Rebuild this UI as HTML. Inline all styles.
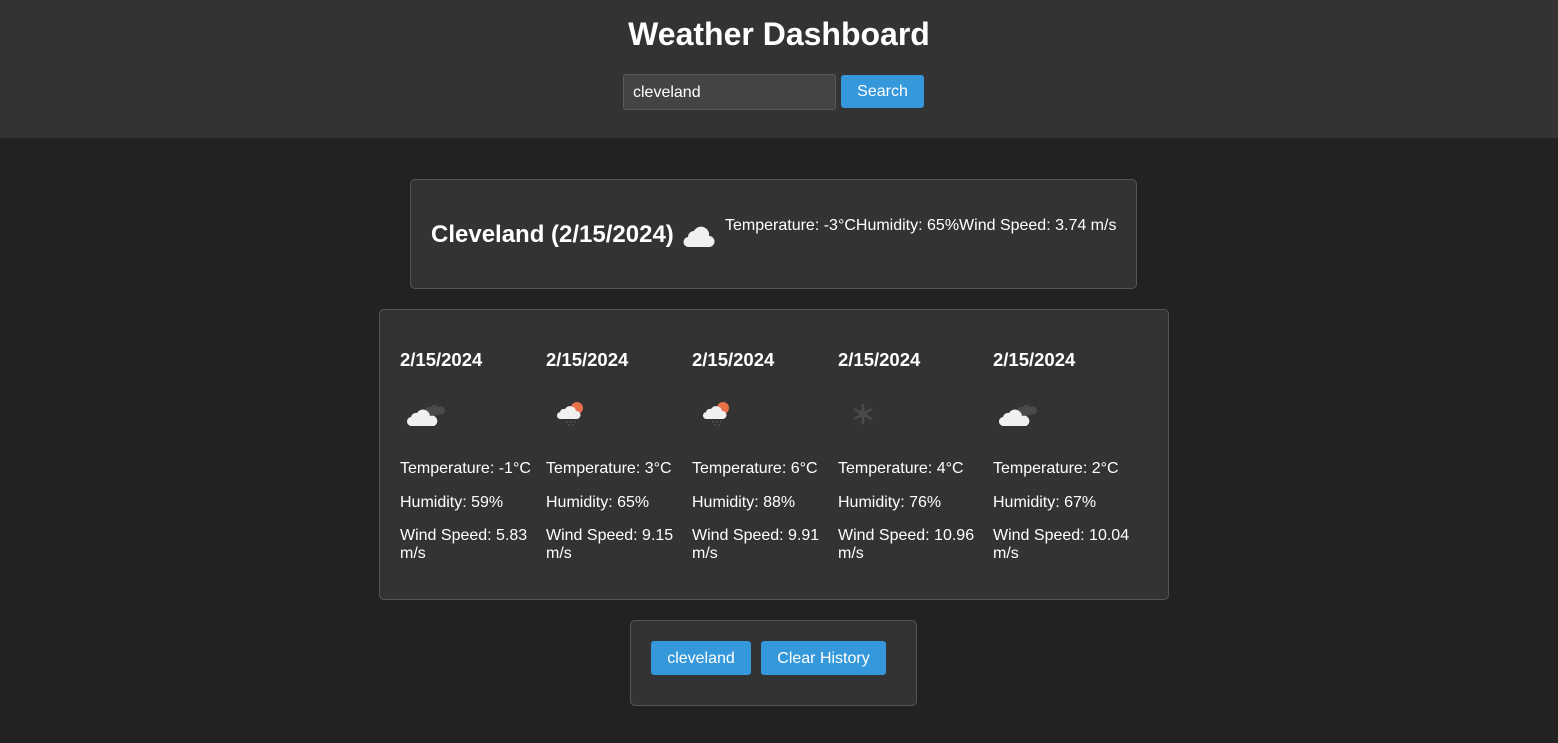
<!DOCTYPE html>
<html><head><meta charset="utf-8"><style>
*{margin:0;padding:0;box-sizing:border-box}
body{width:1558px;height:743px;background:#222;color:#fff;font-family:"Liberation Sans",Arial,sans-serif;position:relative;overflow:hidden}
.a{position:absolute}
header{position:absolute;left:0;top:0;width:1558px;height:138px;background:#333}
h1{position:absolute;top:16px;width:100%;text-align:center;font-size:32px;font-weight:bold}
.card{position:absolute;background:#333;border:1px solid #555;border-radius:5px}
.btn{position:absolute;background:#3498db;color:#fff;font-size:16px;border-radius:3px;text-align:center}
.t{position:absolute;font-size:16px;white-space:nowrap}
.d{position:absolute;font-size:18.5px;font-weight:bold;top:349px}
</style></head><body>
<header>
<h1>Weather Dashboard</h1>
<div class="a" style="left:623px;top:74px;width:213px;height:36px;background:#444;border:1px solid #5a5a5a;border-radius:3px;font-size:16px;padding:9px 9px">cleveland</div>
<div class="btn" style="left:841px;top:75px;width:83px;height:33px;line-height:34px">Search</div>
</header>

<div class="card" style="left:410px;top:179px;width:727px;height:110px"></div>
<div class="a" style="left:431px;top:221px;font-size:24px;font-weight:bold">Cleveland (2/15/2024)</div>
<svg class="a" style="left:683px;top:218px" width="32" height="30" viewBox="0 0 32 30"><path d="M6 29a5 5 0 0 1-1-10a6 6 0 0 1 6-6a8 8 0 0 1 15 5a5.5 5.5 0 0 1 0 11z" fill="#f0f0f0"/></svg>
<div class="t" style="left:725px;top:217px">Temperature: -3°CHumidity: 65%Wind Speed: 3.74 m/s</div>

<div class="card" style="left:379px;top:309px;width:790px;height:291px"></div>

<div class="d" style="left:400px">2/15/2024</div>
<div class="d" style="left:546px">2/15/2024</div>
<div class="d" style="left:692px">2/15/2024</div>
<div class="d" style="left:838px">2/15/2024</div>
<div class="d" style="left:993px">2/15/2024</div>

<svg class="a" style="left:406px;top:400px" width="40" height="28" viewBox="0 0 40 28"><path d="M22 17a4 4 0 0 1 3-10a4 4 0 0 1 7 0a4 4 0 0 1 5 7z" fill="#4a4a4a"/><path d="M6 26a4.5 4.5 0 0 1-1-9a5 5 0 0 1 6-4a7 7 0 0 1 13 3a5 5 0 0 1 4 10z" fill="#f0f0f0"/></svg>
<svg class="a" style="left:998px;top:400px" width="40" height="28" viewBox="0 0 40 28"><path d="M22 17a4 4 0 0 1 3-10a4 4 0 0 1 7 0a4 4 0 0 1 5 7z" fill="#4a4a4a"/><path d="M6 26a4.5 4.5 0 0 1-1-9a5 5 0 0 1 6-4a7 7 0 0 1 13 3a5 5 0 0 1 4 10z" fill="#f0f0f0"/></svg>

<svg class="a" style="left:556px;top:400px" width="32" height="28" viewBox="0 0 32 28"><circle cx="21" cy="8" r="6" fill="#e8714a"/><path d="M5 19a3.5 3.5 0 0 1-1-7a4 4 0 0 1 5-3a6 6 0 0 1 11 2a4 4 0 0 1 1 8z" fill="#f0f0f0"/><g fill="#555"><rect x="10" y="21" width="1.5" height="1.5"/><rect x="14" y="21" width="1.5" height="1.5"/><rect x="18" y="21" width="1.5" height="1.5"/><rect x="12" y="24" width="1.5" height="1.5"/><rect x="16" y="24" width="1.5" height="1.5"/></g></svg>
<svg class="a" style="left:702px;top:400px" width="32" height="28" viewBox="0 0 32 28"><circle cx="21" cy="8" r="6" fill="#e8714a"/><path d="M5 19a3.5 3.5 0 0 1-1-7a4 4 0 0 1 5-3a6 6 0 0 1 11 2a4 4 0 0 1 1 8z" fill="#f0f0f0"/><g fill="#555"><rect x="10" y="21" width="1.5" height="1.5"/><rect x="14" y="21" width="1.5" height="1.5"/><rect x="18" y="21" width="1.5" height="1.5"/><rect x="12" y="24" width="1.5" height="1.5"/><rect x="16" y="24" width="1.5" height="1.5"/></g></svg>

<svg class="a" style="left:852px;top:403px" width="22" height="22" viewBox="0 0 22 22"><g stroke="#4a4a4a" stroke-width="2.5" stroke-linecap="round"><line x1="11" y1="2" x2="11" y2="20"/><line x1="3" y1="6.5" x2="19" y2="15.5"/><line x1="3" y1="15.5" x2="19" y2="6.5"/></g><circle cx="11" cy="11" r="3" fill="none" stroke="#4a4a4a" stroke-width="2"/></svg>

<div class="t" style="left:400px;top:460px">Temperature: -1°C</div>
<div class="t" style="left:400px;top:494px">Humidity: 59%</div>
<div class="t" style="left:400px;top:527px;line-height:18px">Wind Speed: 5.83<br>m/s</div>
<div class="t" style="left:546px;top:460px">Temperature: 3°C</div>
<div class="t" style="left:546px;top:494px">Humidity: 65%</div>
<div class="t" style="left:546px;top:527px;line-height:18px">Wind Speed: 9.15<br>m/s</div>
<div class="t" style="left:692px;top:460px">Temperature: 6°C</div>
<div class="t" style="left:692px;top:494px">Humidity: 88%</div>
<div class="t" style="left:692px;top:527px;line-height:18px">Wind Speed: 9.91<br>m/s</div>
<div class="t" style="left:838px;top:460px">Temperature: 4°C</div>
<div class="t" style="left:838px;top:494px">Humidity: 76%</div>
<div class="t" style="left:838px;top:527px;line-height:18px">Wind Speed: 10.96<br>m/s</div>
<div class="t" style="left:993px;top:460px">Temperature: 2°C</div>
<div class="t" style="left:993px;top:494px">Humidity: 67%</div>
<div class="t" style="left:993px;top:527px;line-height:18px">Wind Speed: 10.04<br>m/s</div>

<div class="card" style="left:630px;top:620px;width:287px;height:86px"></div>
<div class="btn" style="left:651px;top:641px;width:100px;height:34px;line-height:35px">cleveland</div>
<div class="btn" style="left:761px;top:641px;width:125px;height:34px;line-height:35px">Clear History</div>
</body></html>
